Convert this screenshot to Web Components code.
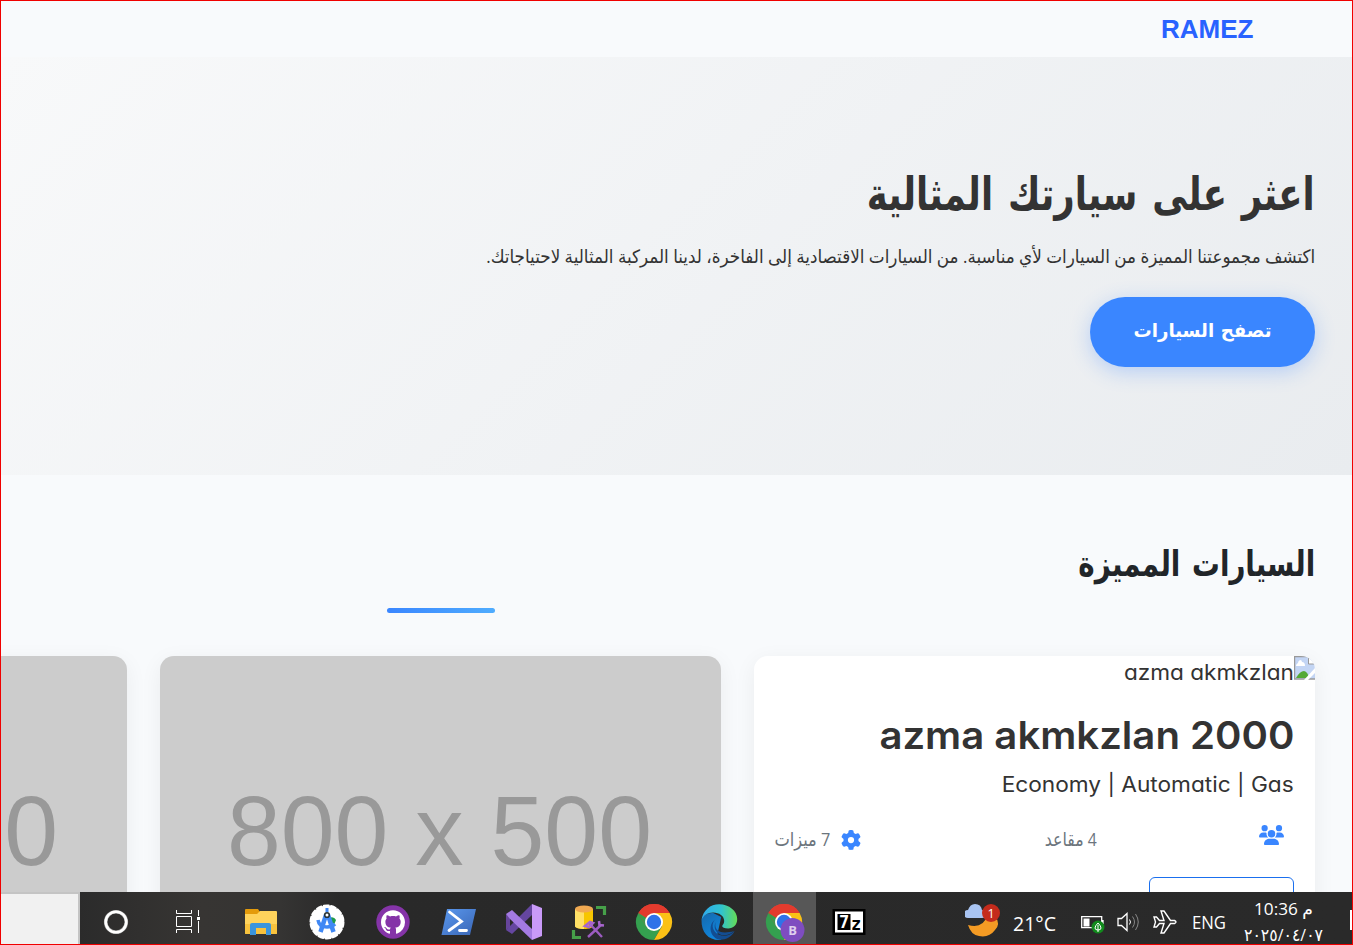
<!DOCTYPE html>
<html lang="ar">
<head>
<meta charset="utf-8">
<title>RAMEZ</title>
<style>
html,body{margin:0;height:100%;overflow:hidden;font-family:"Open Sans","DejaVu Sans",sans-serif}
</style>
</head>
<body>
<desktop-frame>
  <site-page slot="page">
    <site-header><fit-text w="92.5" size="26" lh="40" weight="700" face="Liberation Sans">RAMEZ</fit-text></site-header>
    <hero-banner>
      <fit-text slot="title" w="448" size="45.5" lh="60" weight="700" gap=".16">اعثر على سيارتك المثالية</fit-text>
      <fit-text slot="lead" w="829" size="18.5" lh="30">اكتشف مجموعتنا المميزة من السيارات لأي مناسبة. من السيارات الاقتصادية إلى الفاخرة، لدينا المركبة المثالية لاحتياجاتك.</fit-text>
      <fit-text slot="action" w="138" size="19" lh="30" weight="700" gap=".1">تصفح السيارات</fit-text>
    </hero-banner>
    <featured-cars>
      <fit-text slot="title" w="237" size="35.5" lh="50" weight="700" gap=".16">السيارات المميزة</fit-text>
      <car-card>
        <fit-text slot="alt" w="170" size="21" lh="32" face="Inter" features="'cv11'">azma akmkzlan</fit-text>
        <fit-text slot="name" w="415" size="38.5" lh="48" weight="600" face="Inter">azma akmkzlan 2000</fit-text>
        <fit-text slot="info" w="292" size="21" lh="32" face="Inter" features="'cv11'">Economy | Automatic | Gas</fit-text>
        <fit-text slot="seats" w="52" size="19" lh="30">4 مقاعد</fit-text>
        <fit-text slot="extras" w="56" size="19" lh="30">7 ميزات</fit-text>
      </car-card>
      <photo-card><fit-text w="425" size="98" lh="120" face="Liberation Sans">800 x 500</fit-text></photo-card>
      <photo-card><fit-text w="425" size="98" lh="120" face="Liberation Sans">800 x 500</fit-text></photo-card>
    </featured-cars>
  </site-page>
  <task-bar slot="bar"></task-bar>
</desktop-frame>

<script>
function define(name, html, ready){
  customElements.define(name, class extends HTMLElement{
    connectedCallback(){
      if(this.shadowRoot) return;
      this.attachShadow({mode:'open'}).innerHTML = html;
      if(ready) ready.call(this, this.shadowRoot);
    }
  });
}

define('desktop-frame', `<style>
:host{display:flex;flex-direction:column;box-sizing:border-box;width:1353px;height:945px;border:1px solid #f00000;overflow:hidden}
.page{flex:1;min-height:0;overflow:hidden}
</style><div class="page"><slot name="page"></slot></div><slot name="bar"></slot>`);

define('site-page', `<style>:host{display:block;direction:rtl;height:100%;overflow:hidden;background:#f8fafc;color:#333}</style><slot></slot>`);

define('site-header', `<style>:host{display:flex;box-sizing:border-box;height:56px;padding:7.500px 99px 0 0;color:#2962ff}</style><slot></slot>`);

define('hero-banner', `<style>
:host{display:block;box-sizing:border-box;height:418px;padding:105px 37px 0;background:linear-gradient(135deg,#f8f9fa,#e9ecef)}
.lead{margin-top:19px}
.btn{display:flex;justify-content:center;box-sizing:border-box;width:225px;height:70px;margin-top:26px;padding-top:18px;border-radius:35px;background:#3a86ff;color:#fff;box-shadow:0 5px 20px rgba(58,134,255,.3)}
</style>
<slot name="title"></slot><div class="lead"><slot name="lead"></slot></div>
<div class="btn"><slot name="action"></slot></div>`);

define('featured-cars', `<style>
:host{display:block;padding:62px 37px 0}
.title{color:#212529}
.rule{width:108px;height:5px;margin:21px 820px 0 0;border-radius:3px;background:linear-gradient(90deg,#3a86ff,#4facfe)}
.row{display:flex;gap:33px;margin-top:43px}
</style>
<div class="title"><slot name="title"></slot></div><div class="rule"></div>
<div class="row"><slot></slot></div>`);

define('photo-card', `<style>
:host{display:flex;direction:ltr;flex:none;align-items:center;justify-content:center;box-sizing:border-box;padding:0 3px 2px 0;width:561px;height:351px;border-radius:14px 14px 0 0;background:#ccc;color:#999;box-shadow:0 5px 22px rgba(0,0,0,.06)}
</style><slot></slot>`);

define('car-card', `<style>
:host{display:block;flex:none;width:561px;height:351px;border-radius:14px;overflow:hidden;background:#fff;box-shadow:0 5px 22px rgba(0,0,0,.06)}
.alt{display:flex;height:32px}
.alt svg{flex:none;display:block}
.alt div{margin-top:1px}
.body{padding:23px 21px 0}
.info{margin-top:10px}
.spec{display:flex;margin-top:23px;color:#6c757d;height:32px}
.spec svg{flex:none;fill:#3a86ff}
.users{margin:1px 10px 0 162px}
.gear{margin:6px 184px 0 11px}
.more{width:143px;height:60px;margin-top:21px;border:1px solid #1a6fee;border-radius:6px}
</style>
<div class="alt"><svg width="21" height="24" viewBox="0 0 21 24"><path d="M.5.5H15l7 7V23H.5z" fill="#c3d5f4" stroke="#999" stroke-width="1.4"/><path d="M2 10q0-2 2-3 0-2 2-3 2 0 2 2 3 0 3 4z" fill="#fff"/><path d="M2 22q4-7 8-7 4 1 5 7z" fill="#54a936"/><path d="M14.5 0v8H22L15 0z" fill="#fff" stroke="#999"/><path d="M10 24 22 11v5l-8 8z" fill="#fff"/></svg><div><slot name="alt"></slot></div></div>
<div class="body"><slot name="name"></slot><div class="info"><slot name="info"></slot></div>
<div class="spec">
<svg class="users" width="25" height="20" viewBox="0 0 640 512"><path d="M144 0a80 80 0 1 1 0 160A80 80 0 1 1 144 0zM512 0a80 80 0 1 1 0 160A80 80 0 1 1 512 0zM0 298.7C0 239.8 47.8 192 106.7 192h42.7c15.9 0 31 3.5 44.6 9.7c-1.3 7.2-1.9 14.7-1.9 22.3c0 38.2 16.8 72.5 43.3 96H21.3C9.6 320 0 310.4 0 298.7zM405.3 320c26-23.500 42.600-57.800 42.600-96c0-7.600-.7-15-1.900-22.300c13.600-6.300 28.700-9.700 44.600-9.700h42.700C592.200 192 640 239.800 640 298.700c0 11.800-9.600 21.300-21.300 21.300H405.300zM224 224a96 96 0 1 1 192 0 96 96 0 1 1 -192 0zM128 485.300C128 411.700 187.700 352 261.300 352H378.700C452.300 352 512 411.700 512 485.300c0 14.700-11.900 26.700-26.700 26.700H154.700c-14.700 0-26.700-11.900-26.700-26.700z"/></svg>
<slot name="seats"></slot>
<svg class="gear" width="20" height="20" viewBox="0 0 512 512"><path d="M495.9 166.600c3.200 8.700 .5 18.400-6.400 24.600l-43.300 39.400c1.100 8.300 1.700 16.800 1.700 25.400s-.6 17.100-1.700 25.400l43.300 39.400c6.900 6.200 9.600 15.900 6.400 24.600c-4.400 11.900-9.700 23.300-15.800 34.300l-4.700 8.100c-6.600 11-14 21.400-22.100 31.200c-5.900 7.200-15.700 9.600-24.500 6.800l-55.700-17.700c-13.400 10.300-28.200 18.900-44 25.400l-12.500 57.100c-2 9.100-9 16.300-18.200 17.800c-13.800 2.300-28 3.500-42.500 3.500s-28.700-1.200-42.500-3.500c-9.200-1.500-16.200-8.700-18.200-17.800l-12.500-57.100c-15.800-6.500-30.600-15.100-44-25.400L83.100 425.900c-8.800 2.800-18.600 .3-24.500-6.800c-8.100-9.800-15.500-20.200-22.100-31.200l-4.700-8.100c-6.100-11-11.400-22.400-15.800-34.300c-3.200-8.700-.5-18.400 6.400-24.600l43.300-39.400C64.600 273.100 64 264.600 64 256s.6-17.100 1.700-25.400L22.400 191.200c-6.900-6.200-9.600-15.900-6.400-24.600c4.400-11.900 9.700-23.300 15.800-34.300l4.700-8.100c6.600-11 14-21.400 22.100-31.200c5.900-7.200 15.700-9.600 24.500-6.800l55.700 17.700c13.400-10.300 28.200-18.900 44-25.400l12.500-57.100c2-9.100 9-16.300 18.200-17.800C227.300 1.200 241.500 0 256 0s28.700 1.200 42.500 3.500c9.200 1.500 16.200 8.700 18.200 17.800l12.500 57.100c15.800 6.500 30.600 15.100 44 25.400l55.700-17.700c8.800-2.800 18.600-.3 24.500 6.800c8.100 9.800 15.500 20.200 22.100 31.200l4.700 8.100c6.100 11 11.400 22.400 15.800 34.300zM256 336a80 80 0 1 0 0-160 80 80 0 1 0 0 160z"/></svg>
<slot name="extras"></slot>
</div>
<div class="more"></div></div>`);

const chrome = `<path d="M18 18 2.400 9A18 18 0 0 1 33.600 9z" fill="#ea4335"/><path d="M2.400 9A18 18 0 0 0 18 36L25.800 22.500 18 18z" fill="#34a04f"/><path d="M33.600 9A18 18 0 0 1 18 36L25.800 22.500 18 9z" fill="#fbc116"/><path d="M2.400 9 10.200 22.500 18 18 18 9H33.600A18 18 0 0 0 2.400 9z" fill="#e33b2e"/><path d="M2.400 9 10.200 22.500 12 15z" fill="#34a04f"/><circle cx="18" cy="18" r="9" fill="#fff"/><circle cx="18" cy="18" r="7.200" fill="#2f73e8"/>`;
const icons = {
cortana:`<circle cx="18" cy="18" r="10.300" fill="none" stroke="#aaa" stroke-width="3.600"/><circle cx="18" cy="18" r="10.300" fill="none" stroke="#fff" stroke-width="2.500"/>`,
tasks:`<path d="M6.500 6v3.500h15V6M6.500 12.500h15v10h-15zM6.500 29v-3.500h15V29M28.500 6v6M28.500 17v12" fill="none" stroke="#fff"/><path d="M27 13h3v3h-3z" fill="#fff"/>`,
folder:`<g transform="translate(-1)"><path d="M2 6q0-1 1-1h12l2 3-2 3H2z" fill="#e49b0b"/><path d="M2 10h12l3-3h16q1 0 1 1v21q0 1-1 1H3q-1 0-1-1z" fill="#ffd35c"/><path d="M2 20h32v9q0 1-1 1H3q-1 0-1-1z" fill="#f8c23d"/><path d="M7 31V21q0-2 2-2h17q2 0 2 2v10h-5v-7H13v7z" fill="#3b95dd"/></g>`,
studio:`<circle cx="18" cy="18" r="16.500" fill="#fff"/><circle cx="18" cy="18" r="16.500" fill="none" stroke="#fff" stroke-width="2" stroke-dasharray="5 2.400" stroke-linecap="round"/><path d="M20 14q5-2 7 2l-2 5-4-1z" fill="#209b49"/><path d="M17 11 11.500 28M19 11l5.500 17" stroke="#4088f4" stroke-width="4.500"/><path d="M9 16q1 7 9 7 5 0 8-3" fill="none" stroke="#4088f4" stroke-width="3.500"/><path d="M18 4v4" stroke="#4088f4" stroke-width="3"/><circle cx="18" cy="11" r="2.300" fill="#fff" stroke="#253238" stroke-width="1.600"/>`,
github:`<circle cx="18" cy="18" r="16.700" fill="#8534a8"/><g transform="translate(6 6.300) scale(1.500)"><path fill="#fff" d="M8 0C3.580 0 0 3.580 0 8c0 3.540 2.290 6.530 5.470 7.590.4.070.55-.17.55-.38 0-.19-.01-.82-.01-1.490-2.010.37-2.530-.49-2.690-.94-.09-.23-.48-.94-.82-1.130-.28-.15-.68-.52-.01-.53.63-.01 1.080.58 1.230.82.72 1.210 1.870.87 2.330.66.07-.52.28-.87.51-1.070-1.780-.2-3.640-.89-3.640-3.950 0-.87.31-1.590.82-2.150-.08-.2-.36-1.020.08-2.120 0 0 .67-.21 2.200.82.64-.18 1.320-.27 2-.27s1.360.09 2 .27c1.530-1.040 2.200-.82 2.200-.82.44 1.100.16 1.920.08 2.120.51.56.82 1.270.82 2.150 0 3.070-1.870 3.750-3.650 3.950.29.25.54.73.54 1.480 0 1.070-.01 1.930-.01 2.200 0 .21.15.46.55.38A8 8 0 0 0 16 8c0-4.420-3.580-8-8-8z"/></g>`,
shell:`<defs><linearGradient id="g" x2="1" y2="1"><stop stop-color="#5a98ee"/><stop offset="1" stop-color="#3a66b5"/></linearGradient></defs><g transform="translate(1)"><path d="M6 5h29l-6 26H.5z" fill="url(#g)"/><path d="m8.500 8 12 9.500L8 26.500M18.500 26.500h7" fill="none" stroke="#fff" stroke-width="2.800" stroke-linecap="round"/></g>`,
vs:`<g transform="translate(1)"><path d="M0 10 4 13v10l-4 3z" fill="#66449b"/><path d="M0 26 6 30 26 11V0L4 22z" fill="#6546a0"/><path d="M0 10 6 6 26 25v11L4 15z" fill="#a47ae2"/><path d="M26 0 36 4v28l-10 4z" fill="#c99af8"/></g>`,
db:`<path d="M4 5v17c0 4 18 4 18 0V5z" fill="#f7c600"/><path d="M4 5v17c0 2 5 3 9 3V5z" fill="#ffe066"/><ellipse cx="13" cy="5" rx="9" ry="3.400" fill="#f0a952"/><path d="M25 3.500h8.500V11M2.500 26v7.500H10" fill="none" stroke="#46a049" stroke-width="3.200"/><path d="m18 19 13 14M30 21 17 33" stroke="#9b5cc0" stroke-width="2.400"/><path d="m14 22 5-4 3 1-4 4zM28 17l.5 4 4.500.500" fill="none" stroke="#a765cc" stroke-width="2.500"/>`,
chrome,
edge:`<defs><linearGradient id="e" x1="0" x2="1"><stop stop-color="#2fa8ee"/><stop offset=".55" stop-color="#30c3d0"/><stop offset="1" stop-color="#65dd55"/></linearGradient><linearGradient id="f" x1="0" y1="0" x2=".5" y2="1"><stop stop-color="#1668ab"/><stop offset="1" stop-color="#0f86dd"/></linearGradient></defs><g transform="translate(-.8)"><path d="M.3 16C1 12 6 8.500 12 9l8 4-4 18 4 4.900C8 37 0 29 .3 16z" fill="url(#f)"/><path d="M.3 16C2 6 9 .2 18 .2 28 .2 36 7 36 15c0 6-4 9.500-9 9.500-4 0-6-1.300-6-2.500s2-2 2-5c0-5-5-8.500-11-8.500C6 8.500 2 12 .3 16z" fill="url(#e)"/><path d="M14 15.500c-4 4-3 10 1 13.500 5 4 12 4 18.500-2-3 6-9 9-15 8.700-6-1-10-7-9-13 .5-3 2-5.500 4.500-7.200z" fill="#134d92"/><path d="M14.500 18c-2 8 4 13 18.500 9-4 4-9 5-13 4-6-2-8-8-5.500-13z" fill="#134d92"/></g>`,
profile:`<g transform="translate(-1)">${chrome}<circle cx="26.500" cy="26" r="12" fill="#7e4dc0"/><text x="26.500" y="31" font-size="13" font-weight="700" font-family="Open Sans" text-anchor="middle" fill="#ded0ee">B</text></g>`,
zip:`<path d="M.5 5h33v26H.500z" fill="#000"/><path d="M3 7.500h28v21H3z" fill="#fff"/><path d="M5.500 10h13v16h-13z" fill="#000"/><text x="7" y="24" font-size="17" font-weight="700" font-family="DejaVu Sans Mono" fill="#fff">7</text><text x="19" y="26" font-size="17" font-weight="700" font-family="DejaVu Sans Mono" fill="#000">z</text>`,
};
define('app-icon', `<style>:host{display:flex;justify-content:center;flex:none;box-sizing:border-box;width:65.400px;height:52px;padding-top:12px}:host([wide]){width:72px}
:host([active]){background:linear-gradient(90deg,transparent 1.200px,#575757 1.200px 64.200px,transparent 64.200px)}svg{display:block;overflow:visible}</style><svg width="36" height="36" viewBox="0 0 36 36"></svg>`, function(root){
  root.querySelector('svg').innerHTML = icons[this.getAttribute('name')];
});

define('tray-area', `<style>
:host{display:flex;flex:1;min-width:0;height:52px;color:#fff;overflow:hidden}
svg{flex:none;display:block;overflow:visible}
.w{margin:12px 13px 0 -1px}.t{margin-top:15px}.b{margin:21px 0 0 24.500px}.s{margin:19px 0 0 12px}.p{margin:18px 0 0 13px}.l{margin:15px 0 0 15.500px}
.clock{display:flex;flex-direction:column;align-items:center;width:80px;margin:3px 0 0 17px}
.end{width:2px;height:20px;margin:18px 0 0 auto;background:#fff}
</style>
<svg class="w" width="36" height="36" viewBox="0 0 36 36"><path d="M4 21q15 4 19-9l8 0q6 8 0 14-6 8-16 6Q7 31 4 21z" fill="#f49b24"/><path d="M4 14q-4 0-4-4t4-4q2-6 7-6 6 0 7 6 4 0 4 5 0 3-4 3z" fill="#a9c4f2"/><circle cx="27" cy="9" r="9" fill="#c42b1c"/><text x="27" y="13.500" font-size="12.500" font-family="Open Sans" text-anchor="middle" fill="#fff">1</text></svg>
<fit-text class="t" w="43" size="20.500" lh="32">21°C</fit-text>
<svg class="b" width="24" height="20" viewBox="0 0 24 20"><path d="M.7 3.700h20v11H.7zM22 7v4" fill="none" stroke="#fff" stroke-width="1.300"/><path d="M2.500 5.500h6v8h-6z" fill="#fff"/><circle cx="17" cy="14" r="6.500" fill="#118a1c"/><path d="M17 19V12M17 10q-3 3-3 5 0 2 3 2t3-2q0-2-3-5z" fill="none" stroke="#fff"/></svg>
<svg class="s" width="23" height="22" viewBox="0 0 23 22"><path d="M1 7.500h3.500L10 2.500v17l-5.500-5H1z" fill="none" stroke="#fff" stroke-width="1.300"/><path d="M12.500 8.500q2 2.500 0 5" fill="none" stroke="#fff"/><path d="M15.500 5.500q4 5.500 0 11M18.500 3q5.500 8 0 16" fill="none" stroke="#888"/></svg>
<svg class="p" width="24" height="24" viewBox="0 0 24 24"><path d="M1 7h2.500l3 3.500H11L8 1h3l6.500 9.500h4q3 1.500 0 3h-4L11 23H8l3-9.500H6.500l-3 3.500H1l1.500-5z" fill="none" stroke="#fff" stroke-width="1.400"/></svg>
<fit-text class="l" w="34" size="17.500" lh="30">ENG</fit-text>
<div class="clock"><fit-text w="59" size="17" lh="28">10:36 م</fit-text><fit-text w="79" size="17" lh="24">٢٠٢٥/٠٤/٠٧</fit-text></div>
<div class="end"></div>`);

define('task-bar', `<style>
:host{display:flex;flex:none;height:52px;direction:ltr;background:linear-gradient(90deg,#2b2b2b 78px,#373533 200px,#353433 280px,#292929 340px,#2a2a2a)}
.search{box-sizing:border-box;width:79px;height:52px;background:#f1f1f1;border:solid #c4c4c4;border-width:2px 2px 0 0;flex:none}
.apps{display:flex;flex:none;margin-right:82px}
.gap{width:5.100px}
</style>
<div class="search"></div>
<div class="apps"><app-icon wide name="cortana"></app-icon><app-icon wide name="tasks"></app-icon><div class="gap"></div>
${['folder','studio','github','shell','vs','db','chrome','edge'].map(n=>`<app-icon name="${n}"></app-icon>`).join('')}<app-icon name="profile" active></app-icon><app-icon name="zip"></app-icon></div>
<tray-area></tray-area>`);

/* One line of text, condensed or widened to an exact measure.
   Registered last: it reads the direction that its container sets. */
define('fit-text', `<style>
:host{display:block;flex:none;white-space:nowrap}
span{display:inline-block;white-space:nowrap}
</style><span><slot></slot></span>`, function(root){
  const a = n => this.getAttribute(n), span = root.querySelector('span');
  this.style.cssText = `width:${a('w')}px;height:${a('lh')}px;line-height:${a('lh')}px;font-size:${a('size')}px;font-weight:${a('weight')||400};word-spacing:${a('gap')||0}em`;
  if(a('face')) this.style.fontFamily = `"${a('face')}","DejaVu Sans",sans-serif`;
  if(a('features')) this.style.fontFeatureSettings = a('features');
  const rtl = getComputedStyle(this).direction === 'rtl';
  span.style.transformOrigin = rtl ? 'right' : 'left';
  span.style.transform = `scaleX(${a('w')/span.getBoundingClientRect().width})`;
});
</script>
</body>
</html>
